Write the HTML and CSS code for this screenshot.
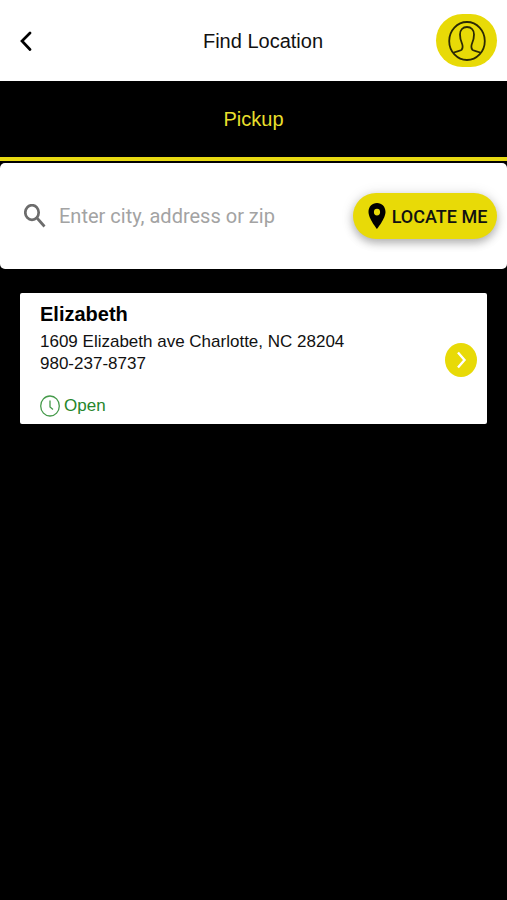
FILE: index.html
```html
<!DOCTYPE html>
<html lang="en">
<head>
<meta charset="utf-8">
<meta name="viewport" content="width=device-width, initial-scale=1">
<title>Find Location</title>
<link rel="stylesheet" href="styles.css">
</head>
<body>
<header class="topbar">
  <button class="back" type="button" aria-label="Back">
    <svg width="12" height="20" viewBox="0 0 12 20"><path d="M10 2 2 10l8 8.500"/></svg>
  </button>
  <h1 class="title">Find Location</h1>
  <button class="profile" type="button" aria-label="Profile">
    <svg width="38" height="40" viewBox="0 0 38 40"><ellipse cx="19" cy="20" rx="17.800" ry="19"/><path d="M5 32c2-1.600 7-1.800 8.500-3.200 1.500-1.600 1.300-4.300.3-6.800C12.500 19 12 17 12 13.500 12 9 14.800 6 19 6s7 3 7 7.500c0 3.500-.5 5.500-1.800 8.500-1 2.500-1.200 5.200.3 6.800C26 30.200 31 30.400 33 32"/></svg>
  </button>
</header>
<nav class="tabs"><a class="tab" href="#pickup" aria-current="page">Pickup</a></nav>
<main id="pickup">
  <form class="search">
    <label class="field">
      <svg width="24" height="24" viewBox="0 0 24 24" aria-hidden="true"><ellipse cx="8" cy="8.500" rx="6.700" ry="7.300"/><path d="m13 14 7.500 8.500"/></svg>
      <input type="text" placeholder="Enter city, address or zip" aria-label="City, address or zip">
    </label>
    <button class="locate" type="button">
      <svg width="18" height="26" viewBox="0 0 18 26" aria-hidden="true"><path fill-rule="evenodd" d="M9 0C4 0 .5 3.800.5 9c0 6.500 8.500 17 8.500 17s8.500-10.500 8.500-17C17.500 3.800 14 0 9 0Zm0 5.700a3.100 3.400 0 1 1 0 6.800 3.100 3.400 0 0 1 0-6.800Z"/></svg>
      LOCATE ME
    </button>
  </form>
  <article class="card">
    <div class="details">
      <h2 class="name">Elizabeth</h2>
      <p class="line">1609 Elizabeth ave Charlotte, NC 28204</p>
      <p class="line">980-237-8737</p>
      <p class="status">
        <svg width="20" height="22" viewBox="0 0 20 22" aria-hidden="true"><ellipse cx="10" cy="11" rx="9.300" ry="10"/><path d="M10 5.500V12l3 2.500"/></svg>
        Open
      </p>
    </div>
    <button class="go" type="button" aria-label="Choose Elizabeth">
      <svg width="12" height="18" viewBox="0 0 12 18"><path d="m3 1.500 6.500 7.500L3 16.500"/></svg>
    </button>
  </article>
</main>
</body>
</html>
```
FILE: styles.css
```css
* {
  box-sizing: border-box;
}

body {
  margin: 0;
  min-height: 100vh;
  background: #000;
  color: #111;
  font-family: "Liberation Sans", Arial, sans-serif;
}

button {
  display: flex;
  align-items: center;
  justify-content: center;
  padding: 0;
  border: 0;
  background: none;
  color: inherit;
}

svg {
  display: block;
  flex: none;
  fill: none;
}

h1, h2, p {
  margin: 0;
}

.topbar {
  display: grid;
  grid-template-columns: 80px 1fr 61px;
  align-items: center;
  height: 81px;
  padding: 0 10px;
  background: #fff;
}

.back {
  width: 32px;
  height: 40px;
}

.back svg {
  stroke: #000;
  stroke-width: 2.7;
  stroke-linecap: round;
}

.title {
  font-size: 20px;
  font-weight: 400;
  line-height: 24px;
  text-align: center;
}

.profile {
  width: 61px;
  height: 53px;
  border-radius: 27px;
  background: #e8da07;
}

.profile svg {
  stroke: #2b2905;
  stroke-width: 1.8;
}

.tabs {
  display: flex;
  height: 80px;
  border-bottom: 4px solid #e8da12;
}

.tab {
  flex: 1;
  display: flex;
  align-items: center;
  justify-content: center;
  color: #e8df2c;
  font-size: 20px;
  text-decoration: none;
}

.search {
  display: flex;
  align-items: center;
  gap: 12px;
  height: 106px;
  margin-top: 2px;
  padding: 0 10px 0 24px;
  border-radius: 5px;
  background: #fff;
}

.field {
  flex: 1;
  display: flex;
  align-items: center;
  gap: 11px;
  min-width: 0;
}

.field svg {
  stroke: #6c6c6c;
  stroke-width: 2.7;
}

.field input {
  flex: 1;
  min-width: 0;
  padding: 0;
  border: 0;
  outline: 0;
  background: none;
  color: #111;
  font: 20px Roboto, sans-serif;
}

.field input::placeholder {
  color: #a3a3a3;
  opacity: 1;
}

.locate {
  gap: 6px;
  width: 144px;
  height: 46px;
  padding-left: 5px;
  border-radius: 23px;
  background: #e8da07;
  box-shadow: 0 4px 8px rgba(0, 0, 0, 0.25), 0 1px 14px rgba(0, 0, 0, 0.12);
  color: #111;
  font: 500 18px Roboto, sans-serif;
  white-space: nowrap;
}

.locate svg {
  fill: #000;
}

.card {
  display: flex;
  align-items: center;
  justify-content: space-between;
  margin: 24px 20px;
  padding: 9px 10px 7px 20px;
  border-radius: 2px;
  background: #fff;
}

.name {
  margin-bottom: 5px;
  color: #000;
  font-size: 20px;
  line-height: 24px;
}

.line {
  font-size: 17px;
  line-height: 22px;
}

.status {
  display: flex;
  align-items: center;
  gap: 4px;
  margin-top: 20px;
  color: #26862b;
  font-size: 17px;
  line-height: 22px;
}

.status svg {
  stroke: #459a4a;
  stroke-width: 1.3;
}

.go {
  flex: none;
  width: 32px;
  height: 34px;
  border-radius: 50%;
  background: #e8da07;
}

.go svg {
  stroke: #fff;
  stroke-width: 2.4;
}
```
